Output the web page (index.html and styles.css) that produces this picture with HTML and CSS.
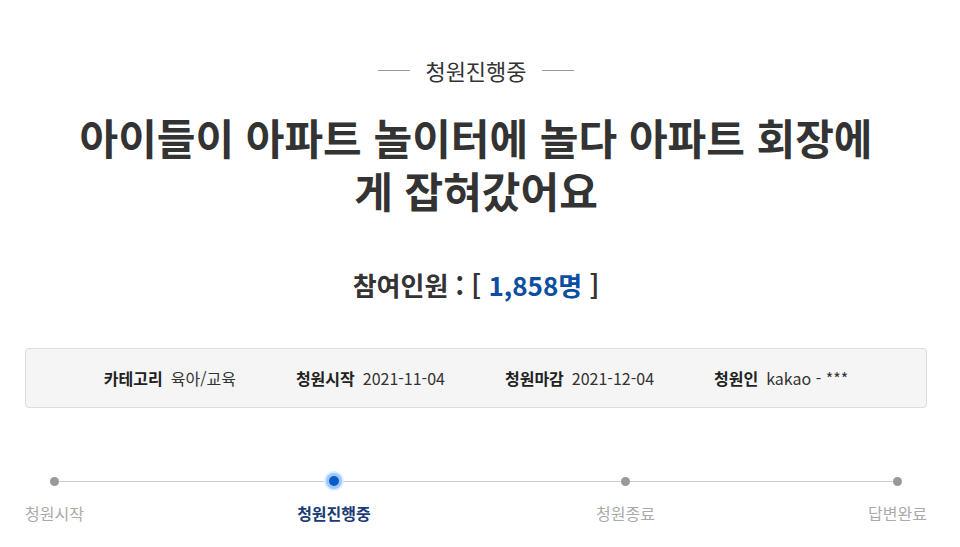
FILE: index.html
```html
<!DOCTYPE html>
<html lang="ko">
<head>
    <meta charset="UTF-8">
    <meta name="viewport" content="width=device-width, initial-scale=1.0">
    <title>청원진행중</title>
    <link rel="stylesheet" href="styles.css">
</head>
<body>
    <div class="petition">
        <p class="petition-state">청원진행중</p>

        <h1 class="petition-title">아이들이 아파트 놀이터에 놀다 아파트 회장에게 잡혀갔어요</h1>

        <h2 class="petition-count">참여인원 : [ <span class="count-num">1,858명</span> ]</h2>

        <ul class="petition-info">
            <li><strong>카테고리</strong> <span>육아/교육</span></li>
            <li><strong>청원시작</strong> <span>2021-11-04</span></li>
            <li><strong>청원마감</strong> <span>2021-12-04</span></li>
            <li><strong>청원인</strong> <span>kakao - ***</span></li>
        </ul>

        <ol class="progress">
            <li class="step"><i class="dot"></i><span>청원시작</span></li>
            <li class="step on"><i class="dot"></i><span>청원진행중</span></li>
            <li class="step"><i class="dot"></i><span>청원종료</span></li>
            <li class="step"><i class="dot"></i><span>답변완료</span></li>
        </ol>
    </div>
</body>
</html>
```

FILE: styles.css
```css
body {
    margin: 0;
    font-family: "Noto Sans CJK KR", "Noto Sans", sans-serif;
    color: #333;
    background: #fff;
}
.petition {
    width: 902px;
    margin-left: 25px;
    padding-top: 55px;
}
.petition-state {
    margin: 0;
    display: flex;
    justify-content: center;
    align-items: center;
    gap: 15px;
    font-size: 22px;
    line-height: 30px;
    color: #333;
}
.petition-state::before,
.petition-state::after {
    content: "";
    width: 32px;
    height: 1px;
    background: #999;
}
.petition-title {
    margin: 25px 0 0;
    padding: 0 46px;
    text-align: center;
    font-size: 42px;
    line-height: 53px;
    font-weight: 700;
    color: #333;
}
.petition-count {
    margin: 52px 0 0;
    text-align: center;
    font-size: 26px;
    line-height: 34px;
    font-weight: 700;
    color: #333;
}
.petition-count .count-num {
    color: #0b4ea2;
}
.petition-info {
    list-style: none;
    margin: 46px 0 0;
    padding: 0;
    height: 58px;
    display: flex;
    justify-content: center;
    align-items: center;
    gap: 60px;
    background: #f5f5f5;
    border: 1px solid #ddd;
    border-radius: 4px;
    font-size: 16px;
}
.petition-info li {
    display: flex;
    gap: 8px;
}
.petition-info strong {
    color: #222;
}
.petition-info span {
    color: #333;
}
.progress {
    list-style: none;
    margin: 63px 0 0;
    padding: 0;
    display: flex;
    justify-content: space-between;
    background: linear-gradient(#ccc, #ccc) no-repeat 28px 10px / calc(100% - 59px) 1px;
}
.step {
    display: flex;
    flex-direction: column;
    align-items: center;
    gap: 11px;
    font-size: 16px;
    line-height: 22px;
    color: #aaa;
}
.step .dot {
    width: 20px;
    height: 20px;
    display: flex;
    align-items: center;
    justify-content: center;
}
.step .dot::before {
    content: "";
    width: 9px;
    height: 9px;
    border-radius: 50%;
    background: #999;
}
.step.on {
    margin-right: 12px;
    font-weight: 700;
    color: #1a3b73;
}
.step.on .dot::before {
    width: 10px;
    height: 10px;
    background: #0a5cc8;
    box-shadow: 0 0 0 3px #9cc9fb, 0 0 0 5px #dcecfe;
}
```
